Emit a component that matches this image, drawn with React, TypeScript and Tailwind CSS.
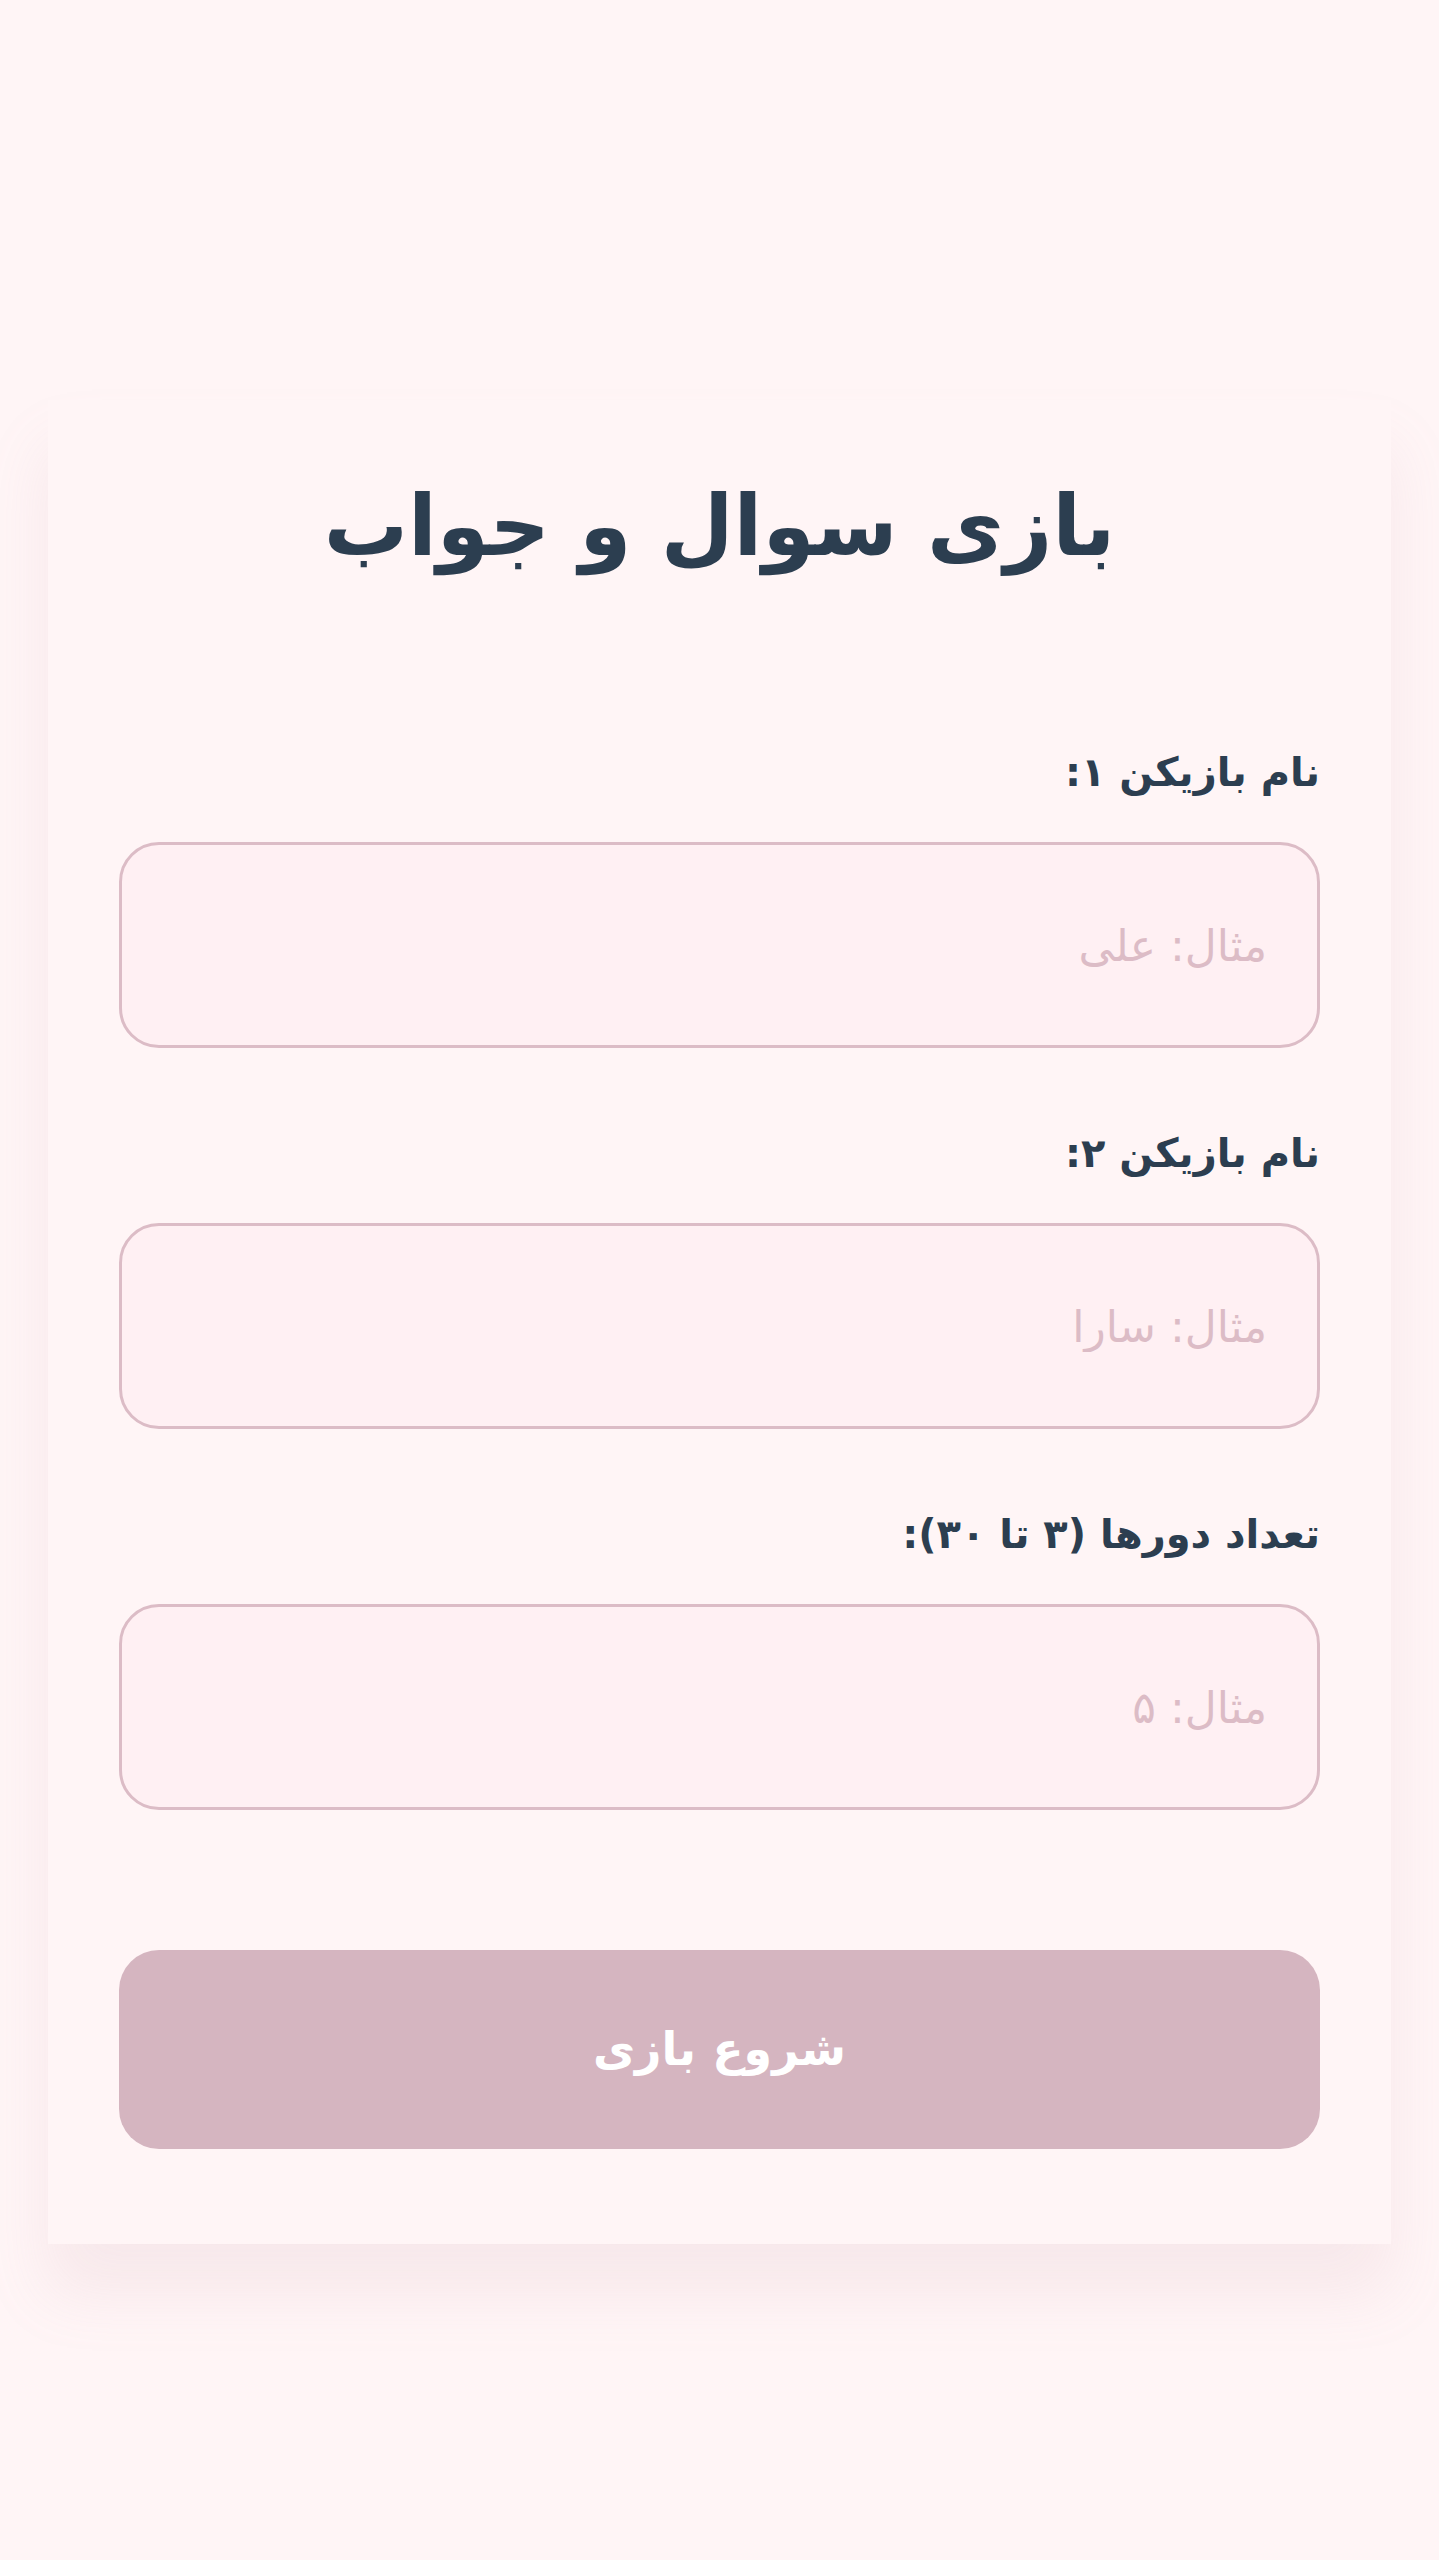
import { useState } from "react";

const FIELDS = [
  { id: "p1", label: "نام بازیکن ۱:", placeholder: "مثال: علی" },
  { id: "p2", label: "نام بازیکن ۲:", placeholder: "مثال: سارا" },
  { id: "rounds", label: "تعداد دورها (۳ تا ۳۰):", placeholder: "مثال: ۵" },
];

function Field({ id, label, placeholder }: { id: string; label: string; placeholder: string }) {
  const [value, setValue] = useState("");
  return (
    <div className="flex flex-col">
      <label htmlFor={id} className="text-[40px] leading-[60px] font-bold text-[#2c3e50] mb-[40px]">
        {label}
      </label>
      <input
        id={id}
        value={value}
        onChange={(e) => setValue(e.target.value)}
        placeholder={placeholder}
        className="h-[206px] w-full rounded-[40px] border-[3px] border-[#dcbcc6] bg-[#fff0f3] px-[50px] text-[44px] text-[#2c3e50] placeholder:text-[#dcbcc6] outline-none"
      />
    </div>
  );
}

export default function App() {
  return (
    <div
      dir="rtl"
      className="min-h-[2560px] w-full bg-[#fff5f6] pt-[400px] px-[48px]"
      style={{ fontFamily: '"DejaVu Sans", "Noto Sans", sans-serif' }}
    >
      <div className="bg-[#fff5f6] px-[71px] pt-[70px] pb-[95px] shadow-[0_48px_60px_rgba(190,150,165,0.13)]">
        <h1 className="text-center text-[84px] leading-[112px] font-bold text-[#2c3e50] mb-[160px]">
          بازی سوال و جواب
        </h1>
        <div className="flex flex-col gap-[75px]">
          {FIELDS.map((f) => (
            <Field key={f.id} {...f} />
          ))}
        </div>
        <button className="mt-[140px] h-[199px] w-full rounded-[40px] bg-[#d5b5c0] text-[46px] font-bold text-white">
          شروع بازی
        </button>
      </div>
    </div>
  );
}
